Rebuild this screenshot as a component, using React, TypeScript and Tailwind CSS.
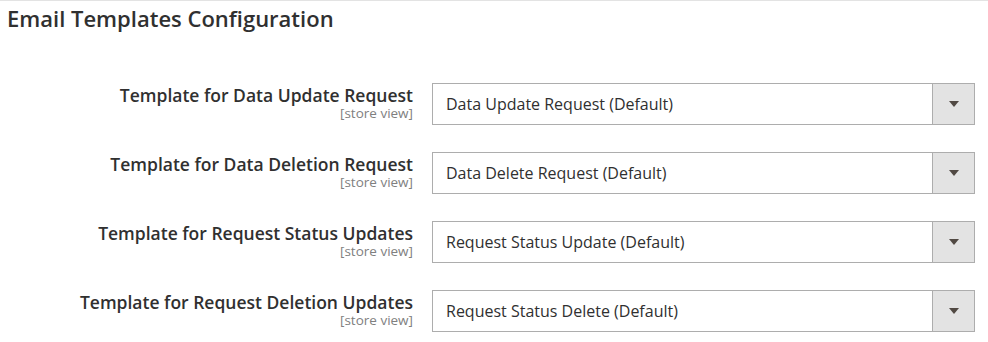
const ROWS = [
  { label: 'Template for Data Update Request', value: 'Data Update Request (Default)' },
  { label: 'Template for Data Deletion Request', value: 'Data Delete Request (Default)' },
  { label: 'Template for Request Status Updates', value: 'Request Status Update (Default)' },
  { label: 'Template for Request Deletion Updates', value: 'Request Status Delete (Default)' },
]

function SelectBox({ value }: { value: string }) {
  return (
    <div className="flex h-[42px] w-[543px] border border-[#adadad] bg-white">
      <div className="flex flex-1 items-center pl-[13px] text-[16px] text-[#303030]">{value}</div>
      <div className="flex w-[42px] items-center justify-center border-l border-[#adadad] bg-[#e3e3e3]">
        <span className="h-0 w-0 border-x-[5px] border-t-[6px] border-x-transparent border-t-[#514943]" />
      </div>
    </div>
  )
}

export default function App() {
  return (
    <div
      className="h-[342px] w-[988px] overflow-hidden border-t border-[#e3e3e3] bg-white"
      style={{ fontFamily: '"Open Sans", sans-serif' }}
    >
      <h2 className="pl-[7px] pt-[2px] text-[22px] font-semibold leading-[30px] text-[#303030]">
        Email Templates Configuration
      </h2>

      <div className="mt-[50px] flex flex-col gap-[27px]">
        {ROWS.map((row) => (
          <div key={row.label} className="flex items-start">
            <div className="w-[413px] pt-[1px] text-right">
              <div className="text-[17.5px] font-semibold leading-[22px] text-[#303030]">{row.label}</div>
              <div className="text-[13.5px] leading-[14px] text-[#808080]">[store view]</div>
            </div>
            <div className="pl-[19px]">
              <SelectBox value={row.value} />
            </div>
          </div>
        ))}
      </div>
    </div>
  )
}
